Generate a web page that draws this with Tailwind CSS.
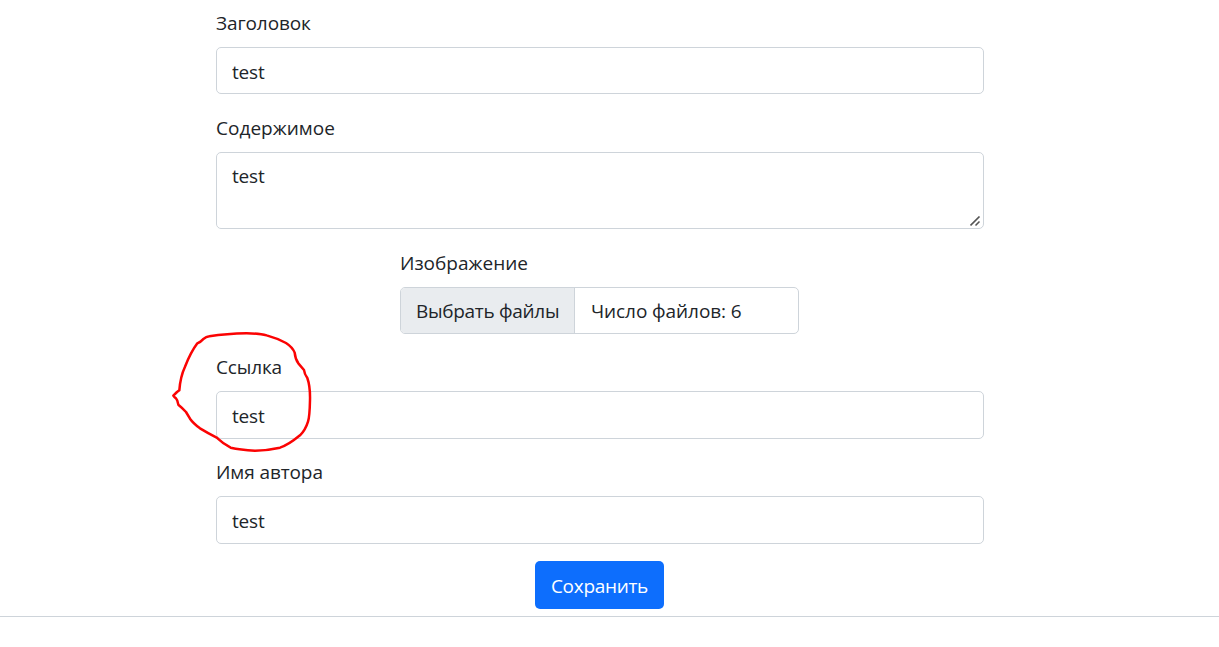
<!DOCTYPE html>
<html lang="ru">
<head>
<meta charset="utf-8">
<title>Форма</title>
<script src="https://cdn.jsdelivr.net/npm/@tailwindcss/browser@4"></script>
</head>
<body class="bg-white text-[#212529] font-['Segoe_UI','Open_Sans','Noto_Sans',sans-serif] text-[19px] leading-[30px] overflow-hidden">
<form class="relative h-[617px] border-b border-[#ced4da] pt-2 pr-[19px] flex flex-col items-center">
  <div class="w-[768px] flex flex-col">
    <label class="mb-[9px] h-[30px] tracking-[-0.1px]"><span>Заголовок</span></label>
    <input class="h-[47px] rounded-[5px] border border-[#ced4da] px-[15px] pt-[3px] outline-none tracking-[-0.2px]" value="test">
    <label class="mt-[19px] mb-[9px] h-[30px] tracking-[0.03px]"><span>Содержимое</span></label>
    <div class="relative h-[77px]">
      <textarea class="block w-full h-full resize-none rounded-[5px] border border-[#ced4da] px-[15px] py-[8px] outline-none tracking-[-0.2px]">test</textarea>
      <svg class="absolute right-[3px] bottom-[2px]" width="11" height="11" viewBox="0 0 11 11" fill="none" stroke="#555" stroke-width="1.6"><path d="M0.5 9.5L9.5 0.5M5.5 9.5L9.5 5.5"/></svg>
    </div>
  </div>
  <div class="w-[399px] mt-[19px] mr-px flex flex-col">
    <label class="mb-[9px] h-[30px]"><span>Изображение</span></label>
    <div class="h-[47px] flex rounded-[5px] border border-[#ced4da] overflow-hidden">
      <div class="w-[174px] shrink-0 bg-[#e9ecef] border-r border-[#ced4da] pl-[15px] pt-[8px] whitespace-nowrap tracking-[-0.3px]"><span>Выбрать файлы</span></div>
      <div class="pl-[16px] pt-[8px] whitespace-nowrap tracking-[-0.08px]"><span>Число файлов: 6</span></div>
    </div>
  </div>
  <div class="w-[768px] mt-[18px] flex flex-col">
    <label class="mb-[9px] h-[30px] tracking-[-0.15px]"><span>Ссылка</span></label>
    <input class="h-[48px] rounded-[5px] border border-[#ced4da] px-[15px] pt-[2px] outline-none tracking-[-0.2px]" value="test">
    <label class="mt-[18px] mb-[9px] h-[30px] tracking-[-0.1px]"><span>Имя автора</span></label>
    <input class="h-[48px] rounded-[5px] border border-[#ced4da] px-[15px] pt-[2px] outline-none tracking-[-0.2px]" value="test">
  </div>
  <button type="button" class="mt-[17px] mr-px w-[129px] h-[48px] shrink-0 rounded-[5px] bg-[#0d6efd] text-white pt-[2px] tracking-[-0.3px]"><span>Сохранить</span></button>
  <svg class="absolute left-[160px] top-[320px]" width="170" height="140" viewBox="0 0 510 420" fill="none" stroke="#fb0303" stroke-width="7.5" stroke-linejoin="round" stroke-linecap="round">
    <path d="M40 227L51 216L58 211Q61 170 75 140Q92 97 112 70Q123 65 129 58Q139 50 148 49Q200 41 260 40Q300 40 320 46Q350 54 378 69Q398 82 404 98Q406 118 415 130L432 150Q433 161 442 174Q451 200 450 240Q449 290 444 305Q436 331 420 346Q385 375 360 383Q325 391 285 392Q240 389 212 383Q190 372 170 353Q145 340 120 325Q99 309 90 296Q84 286 78 276Q65 262 55 254Q53 240 48 235Q43 232 40 227Z"/>
  </svg>
</form>
</body>
</html>
